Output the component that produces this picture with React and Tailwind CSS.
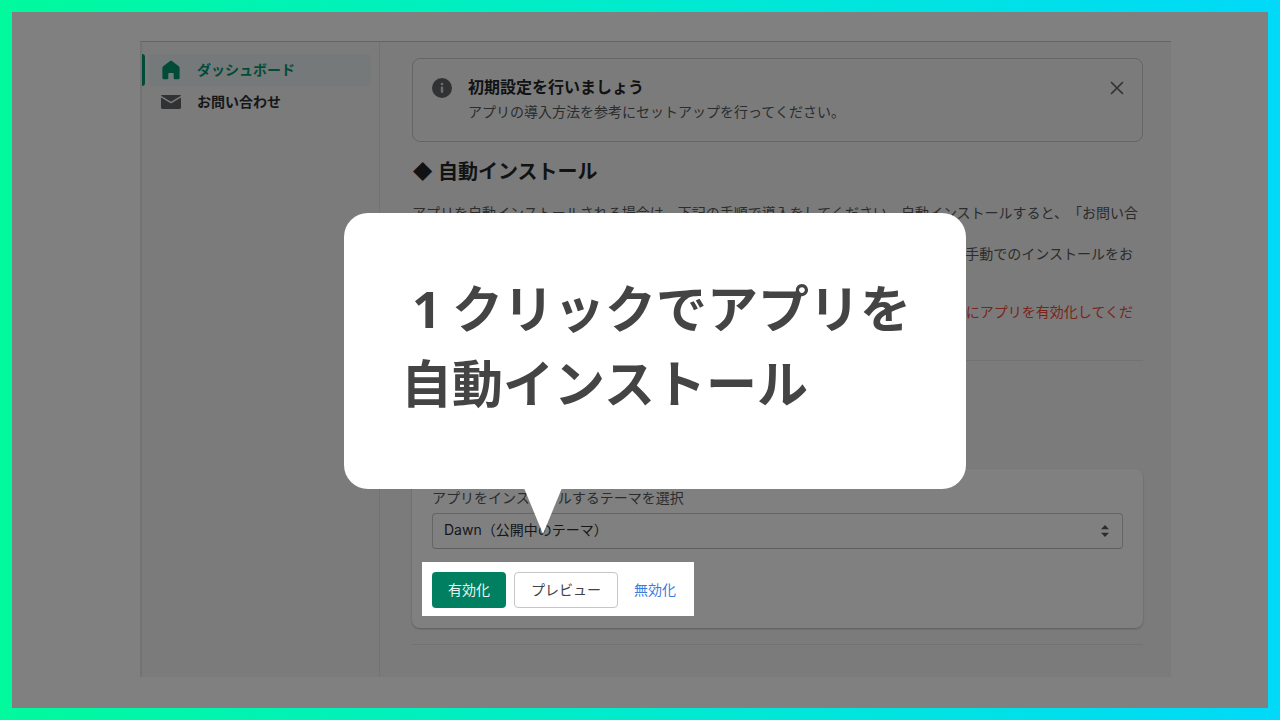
import React from "react";
import clsx from "clsx";

function HomeIcon() {
  return (
    <svg viewBox="0 0 20 20" className="h-5 w-5 shrink-0" fill="#024b39" aria-hidden="true">
      <path d="M9.100.9a1.400 1.400 0 0 1 1.800 0l6.900 5.300c.5.4.8 1 .8 1.600V18c0 .7-.5 1.200-1.200 1.200h-3.700a1 1 0 0 1-1-1v-4.400a.8.8 0 0 0-.8-.8H8.100a.8.8 0 0 0-.8.8v4.400a1 1 0 0 1-1 1H2.600c-.7 0-1.200-.5-1.200-1.200V7.800c0-.6.3-1.200.8-1.600z" />
    </svg>
  );
}

function MailIcon() {
  return (
    <svg viewBox="0 0 20 20" className="h-5 w-5 shrink-0" fill="#303234" aria-hidden="true">
      <path d="M0 3.800C0 3.200.5 2.900 1.200 2.900h17.600c.7 0 1.200.3 1.200.9L10 9.700z" />
      <path d="M0 5.600l9.500 5.600a1 1 0 0 0 1 0L20 5.600v10c0 .9-.6 1.400-1.400 1.400H1.400C.6 17 0 16.500 0 15.600z" />
    </svg>
  );
}

function InfoIcon() {
  return (
    <svg viewBox="0 0 20 20" className="h-5 w-5 shrink-0" aria-hidden="true">
      <circle cx="10" cy="10" r="10" fill="#303234" />
      <circle cx="10" cy="6" r="1.300" fill="#6c6d6e" />
      <rect x="8.800" y="8.600" width="2.400" height="6.400" rx="1" fill="#6c6d6e" />
    </svg>
  );
}

const navItems = [
  { label: "ダッシュボード", icon: HomeIcon, active: true },
  { label: "お問い合わせ", icon: MailIcon, active: false },
];

function Sidebar() {
  return (
    <nav className="w-[238px] shrink-0 border-r border-[#727272] pt-3">
      <ul>
        {navItems.map(({ label, icon: Icon, active }) => (
          <li key={label} className="flex h-8 gap-1">
            <span className={clsx("w-[3px] rounded-r", active && "bg-[#024b39]")} />
            <a
              href="#"
              className={clsx(
                "mr-2 flex flex-1 items-center gap-4 rounded pl-3 text-sm font-bold",
                active ? "bg-[#767979] text-[#024b39]" : "text-[#151617]"
              )}
            >
              <Icon />
              {label}
            </a>
          </li>
        ))}
      </ul>
    </nav>
  );
}

function Banner() {
  return (
    <section className="flex items-start rounded-lg border border-[#636666] py-4 pr-[15px] pl-[19px]">
      <div className="pt-[3px]">
        <InfoIcon />
      </div>
      <div className="ml-4 flex-1">
        <h2 className="text-base leading-6 font-bold text-[#111213]">初期設定を行いましょう</h2>
        <p className="text-sm leading-[26px]">アプリの導入方法を参考にセットアップを行ってください。</p>
      </div>
      <button type="button" aria-label="閉じる" className="pt-[3px]">
        <svg viewBox="0 0 20 20" className="h-5 w-5" stroke="#303234" strokeWidth="1.700" strokeLinecap="round" aria-hidden="true">
          <path d="M4.500 4.500l11 11M15.500 4.500l-11 11" />
        </svg>
      </button>
    </section>
  );
}

function ThemeCard() {
  return (
    <section className="mt-[108px] rounded-lg bg-[#808080] px-5 pt-[19px] pb-3 shadow-[0_1px_2px_rgba(0,0,0,0.25)]">
      <label htmlFor="theme" className="block text-sm leading-5">
        アプリをインストールするテーマを選択
      </label>
      <div className="relative mt-[5px]">
        <select
          id="theme"
          className="block h-9 w-full appearance-none rounded border border-[#646566] border-b-[#5c5e5f] bg-transparent px-[11px] pb-0.5 text-sm text-[#151617]"
        >
          <option>Dawn（公開中のテーマ）</option>
        </select>
        <svg viewBox="0 0 8 12" className="pointer-events-none absolute top-3 right-[14px] h-3 w-2" fill="#2a2c2d" aria-hidden="true">
          <path d="M4 0l4 4.200H0zM4 12l4-4.200H0z" />
        </svg>
      </div>
      <div className="mt-[13px] -ml-[10px] flex w-fit items-center gap-2 bg-white px-[10px] pt-[10px] pb-2 text-sm">
        <button type="button" className="h-9 rounded bg-[#008060] px-4 text-[#eaf5f1]">
          有効化
        </button>
        <button type="button" className="h-9 rounded border border-[#c4c7ca] bg-white px-4 text-[#404244]">
          プレビュー
        </button>
        <button type="button" className="h-9 px-2 text-[#3b7ddd]">
          無効化
        </button>
      </div>
    </section>
  );
}

function Callout() {
  return (
    <aside className="absolute top-[213px] left-[344px] h-[276px] w-[622px] rounded-3xl bg-white pt-[58px] pl-[57px] text-[51px] leading-[75px] font-bold text-[#444444]">
      <p>
        <span className="inline-block w-[51px] text-center font-['Open_Sans']">1</span>
        クリックでアプリを
      </p>
      <p>自動インストール</p>
      <svg viewBox="0 0 38 46" className="absolute top-[275px] left-[180px] h-[46px] w-[38px]" fill="#ffffff" aria-hidden="true">
        <path d="M0 0h38L19 46z" />
      </svg>
    </aside>
  );
}

export default function App() {
  return (
    <div className="relative flex min-h-screen bg-linear-to-r from-[#00fa9c] to-[#00d9f9] p-3 font-['Inter','Noto_Sans_CJK_JP',sans-serif] text-[#2a2c2d] [text-spacing-trim:space-all]">
      <div className="flex flex-1 bg-[#808080] pt-[29px] pr-[97px] pb-[31px] pl-32">
        <div className="flex flex-1 border-t border-l-2 border-t-[#646666] border-l-[#737373] bg-[#7b7b7b]">
          <Sidebar />
          <main className="min-w-0 flex-1 pt-4 pr-7 pb-8 pl-8">
            <Banner />
            <h1 className="mt-4 text-xl leading-7 font-bold text-[#111213]">◆ 自動インストール</h1>
            <div className="mt-4 text-sm leading-[21px]">
              <p>アプリを自動インストールされる場合は、下記の手順で導入をしてください。自動インストールすると、「お問い合</p>
              <p className="mt-5 pr-[10px] text-right">手動でのインストールをお</p>
              <p className="mt-[37px] pr-[10px] text-right text-[#7a2318]">にアプリを有効化してくだ</p>
            </div>
            <hr className="mt-[38px] border-[#717272]" />
            <ThemeCard />
            <hr className="mt-4 border-[#717272]" />
          </main>
        </div>
      </div>
      <Callout />
    </div>
  );
}
